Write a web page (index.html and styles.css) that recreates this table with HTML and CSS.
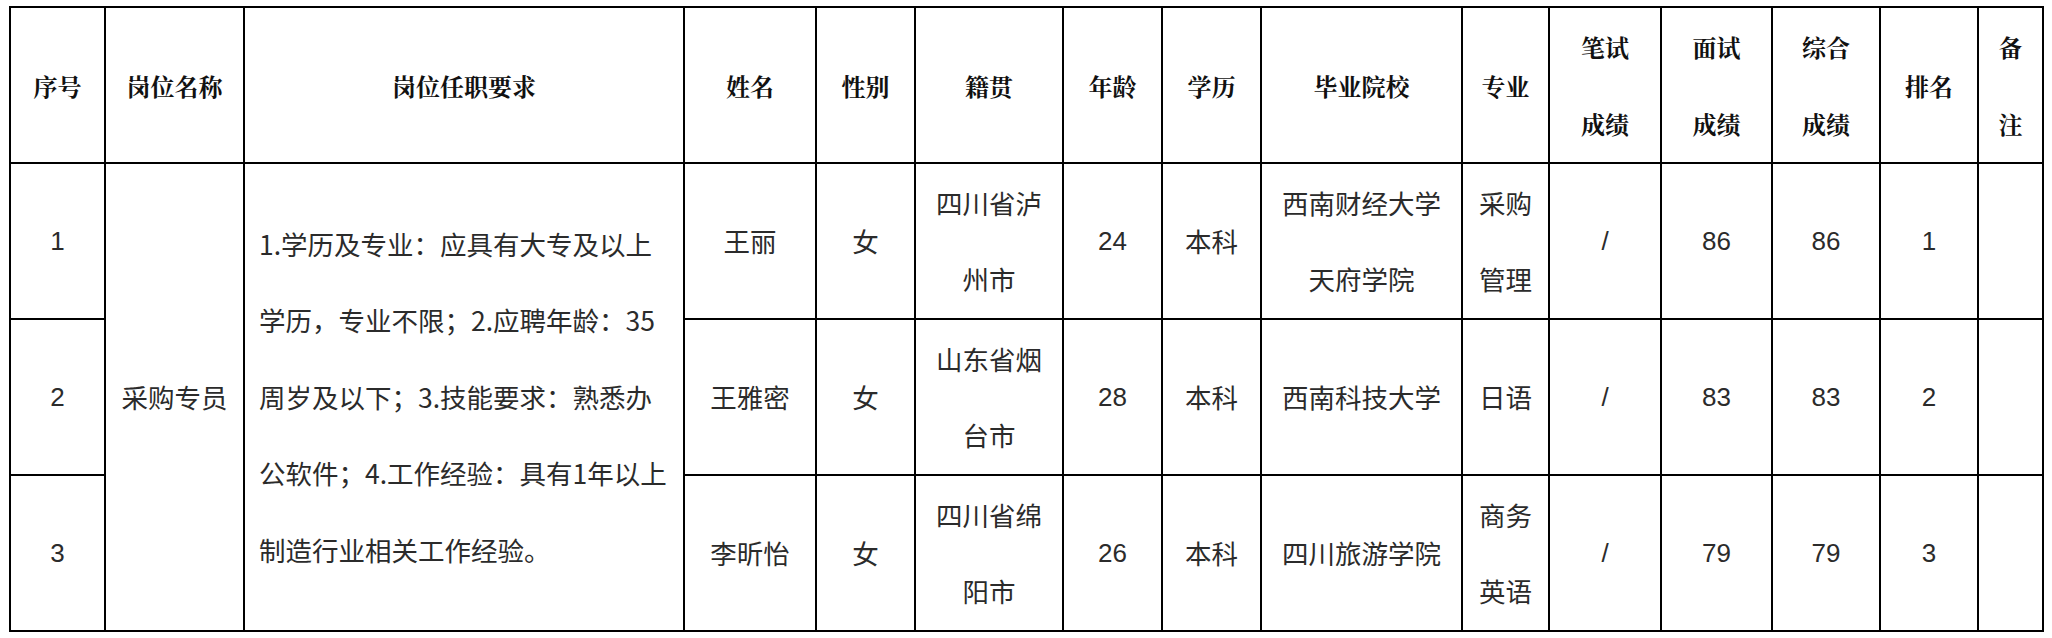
FILE: index.html
```html
<!DOCTYPE html>
<html lang="zh-CN">
<head>
<meta charset="utf-8">
<title>招聘结果公示</title>
<link rel="stylesheet" href="styles.css">
</head>
<body>
<div class="sheet">
  <div class="cell head">序号</div>
  <div class="cell head">岗位名称</div>
  <div class="cell head">岗位任职要求</div>
  <div class="cell head">姓名</div>
  <div class="cell head">性别</div>
  <div class="cell head">籍贯</div>
  <div class="cell head">年龄</div>
  <div class="cell head">学历</div>
  <div class="cell head">毕业院校</div>
  <div class="cell head">专业</div>
  <div class="cell head">笔试<br>成绩</div>
  <div class="cell head">面试<br>成绩</div>
  <div class="cell head">综合<br>成绩</div>
  <div class="cell head">排名</div>
  <div class="cell head">备<br>注</div>

  <div class="cell num">1</div>
  <div class="cell span3">采购专员</div>
  <div class="cell span3 req">1.学历及专业：应具有大专及以上<br>学历，专业不限；2.应聘年龄：35<br>周岁及以下；3.技能要求：熟悉办<br>公软件；4.工作经验：具有1年以上<br>制造行业相关工作经验。</div>
  <div class="cell">王丽</div>
  <div class="cell">女</div>
  <div class="cell">四川省泸<br>州市</div>
  <div class="cell num">24</div>
  <div class="cell">本科</div>
  <div class="cell">西南财经大学<br>天府学院</div>
  <div class="cell">采购<br>管理</div>
  <div class="cell num">/</div>
  <div class="cell num">86</div>
  <div class="cell num">86</div>
  <div class="cell num">1</div>
  <div class="cell"></div>

  <div class="cell num">2</div>
  <div class="cell">王雅密</div>
  <div class="cell">女</div>
  <div class="cell">山东省烟<br>台市</div>
  <div class="cell num">28</div>
  <div class="cell">本科</div>
  <div class="cell">西南科技大学</div>
  <div class="cell">日语</div>
  <div class="cell num">/</div>
  <div class="cell num">83</div>
  <div class="cell num">83</div>
  <div class="cell num">2</div>
  <div class="cell"></div>

  <div class="cell num">3</div>
  <div class="cell">李昕怡</div>
  <div class="cell">女</div>
  <div class="cell">四川省绵<br>阳市</div>
  <div class="cell num">26</div>
  <div class="cell">本科</div>
  <div class="cell">四川旅游学院</div>
  <div class="cell">商务<br>英语</div>
  <div class="cell num">/</div>
  <div class="cell num">79</div>
  <div class="cell num">79</div>
  <div class="cell num">3</div>
  <div class="cell"></div>
</div>
</body>
</html>
```
FILE: styles.css
```css
html, body {
  margin: 0;
  padding: 0;
  background: #ffffff;
}

body {
  padding: 6px 0 0 9px;
}

.sheet {
  display: grid;
  grid-template-columns: 95px 139px 440px 132px 99px 148px 99px 99px 201px 87px 112px 111px 108px 98px 65px;
  grid-template-rows: repeat(4, 156px);
  width: max-content;
  border-top: 2px solid #000;
  border-left: 2px solid #000;
  color: #2b2b2b;
  font-family: "Noto Sans CJK SC", "Noto Sans", sans-serif;
  font-size: 26.5px;
  line-height: 76px;
}

.cell {
  box-sizing: border-box;
  border-right: 2px solid #000;
  border-bottom: 2px solid #000;
  display: flex;
  align-items: center;
  justify-content: center;
  text-align: center;
  overflow: hidden;
}

.head {
  font-family: "Noto Serif CJK SC", "Noto Sans CJK SC", serif;
  font-size: 24px;
  font-weight: 700;
  line-height: 77px;
  color: #111;
}

.num {
  font-family: "Liberation Sans", "Noto Sans", sans-serif;
  font-size: 26px;
}

.span3 {
  grid-row: span 3;
}

.req {
  justify-content: flex-start;
  text-align: left;
  padding-left: 14px;
  line-height: 76.5px;
}
```
